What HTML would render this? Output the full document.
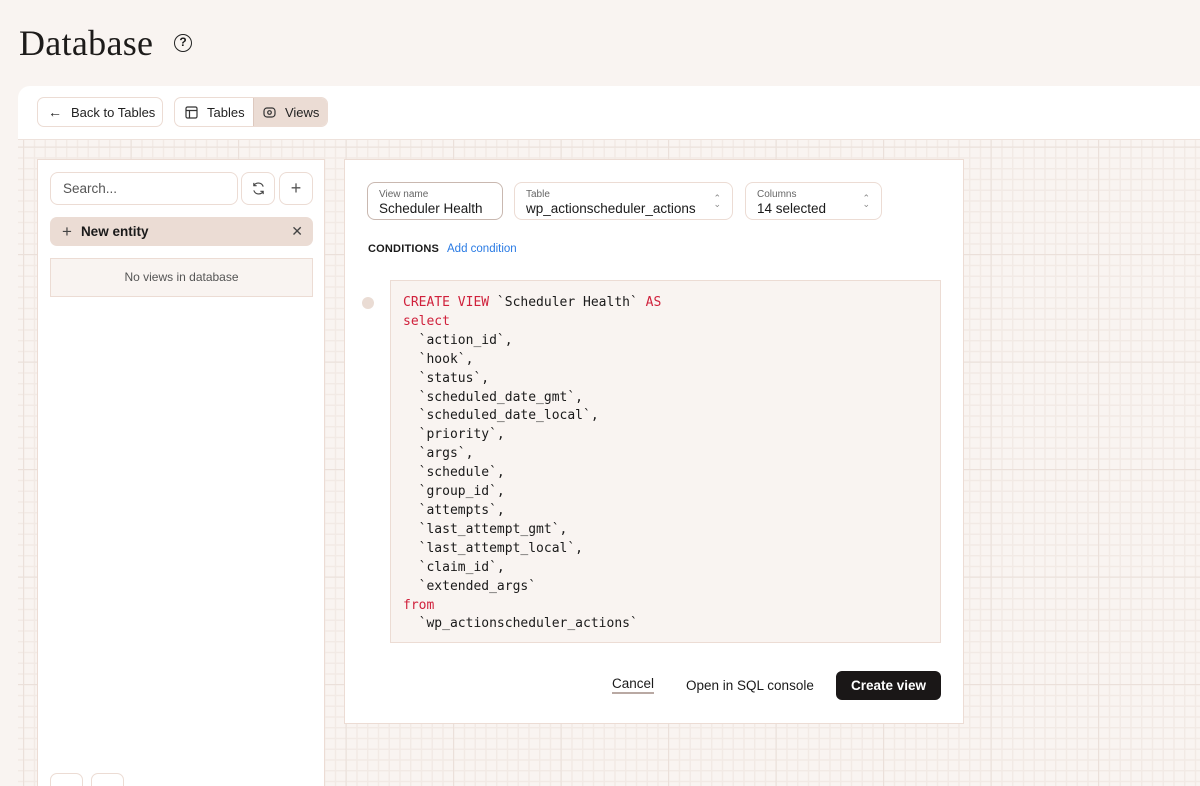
<!DOCTYPE html>
<html><head><meta charset="utf-8"><style>
*{box-sizing:border-box;margin:0;padding:0}
html,body{width:1200px;height:786px;overflow:hidden}
body{background:#f9f4f1;font-family:"Liberation Sans",sans-serif;color:#1a1a1a;position:relative}
h1{position:absolute;left:19px;top:22px;font-family:"Liberation Serif",serif;font-weight:400;font-size:36px;letter-spacing:0.3px;color:#1d1b1a}
.help{position:absolute;left:174px;top:34px;width:18px;height:18px;border:1.8px solid #222;border-radius:50%;font-size:12px;font-weight:bold;text-align:center;line-height:15px}
.top{position:absolute;left:18px;top:86px;width:1182px;height:53px;background:#fff;border-radius:12px 0 0 0}
.btn{position:absolute;height:30px;border:1px solid #ecdcd4;border-radius:7px;background:#fff;font-size:13px;display:flex;align-items:center;color:#222}
.grid{position:absolute;left:18px;top:139px;width:1182px;height:647px;background-color:#f9f4f1;
background-image:linear-gradient(#ebe0da 1px,transparent 1px),linear-gradient(90deg,#ebe0da 1px,transparent 1px),linear-gradient(#f2eae5 1.5px,transparent 1.5px),linear-gradient(90deg,#f2eae5 1.5px,transparent 1.5px);
background-size:107.5px 107.5px,107.5px 107.5px,10.75px 10.75px,10.75px 10.75px;background-position:5px 6.5px,5px 6.5px,5px 6.5px,5px 6.5px;border-top:1px solid #eee2dc}
.left{position:absolute;left:37px;top:159px;width:288px;height:627px;background:#fff;border:1px solid #ecdcd4;border-bottom:none;overflow:hidden}
.main{position:absolute;left:344px;top:159px;width:620px;height:565px;background:#fff;border:1px solid #ecdcd4}
.field{position:absolute;height:38px;border:1px solid #ecdcd4;border-radius:8px;background:#fff;padding:6px 11px}
.field small{display:block;font-size:10px;color:#666;line-height:11px}
.field span{display:block;font-size:13.5px;color:#1a1a1a;line-height:18px}
.chev{position:absolute;right:11px;top:12px;font-size:9px;color:#888;line-height:6px;text-align:center}
pre{position:absolute;left:390px;top:280px;width:551px;height:363px;background:#f9f4f1;border:1px solid #ecdcd4;font-family:"DejaVu Sans Mono","Liberation Mono",monospace;font-size:13px;line-height:18.9px;padding:13px 12px;color:#1a1a1a}
.k{color:#d0213c}
</style></head><body>
<h1>Database</h1><div class="help">?</div>
<div class="top"></div>
<div class="btn" style="left:37px;top:97px;width:126px;padding-left:10px"><span style="font-size:14px;margin-right:9px">←</span>Back to Tables</div>
<div class="btn" style="left:174px;top:97px;width:154px;overflow:hidden">
 <div style="display:flex;align-items:center;padding-left:10px;width:79px;height:100%"><svg width="13" height="13" viewBox="0 0 13 13" fill="none" stroke="#333" stroke-width="1.2"><rect x="1" y="1" width="11" height="11" rx="1.5"/><path d="M1 4.5h11M4.5 4.5v7.5"/></svg><span style="margin-left:9px">Tables</span></div>
 <div style="display:flex;align-items:center;padding-left:9px;width:75px;height:100%;background:#ebdcd4;border-left:1px solid #ddc9bf"><svg width="13" height="13" viewBox="0 0 13 13" fill="none" stroke="#333" stroke-width="1.2"><rect x="1" y="2" width="11" height="9" rx="3"/><circle cx="6.5" cy="6.5" r="1.8"/></svg><span style="margin-left:9px">Views</span></div>
</div>
<div class="grid"></div>
<div class="left">
 <div class="btn" style="left:12px;top:12px;width:188px;height:33px;padding-left:12px;font-size:13.5px;color:#555;border-radius:8px">Search...</div>
 <div class="btn" style="left:203px;top:12px;width:34px;height:33px;justify-content:center;border-radius:8px"><svg width="15" height="15" viewBox="0 0 16 16" fill="none" stroke="#444" stroke-width="1.2"><path d="M13 6a5.5 5.5 0 0 0-10-1M3 10a5.5 5.5 0 0 0 10 1"/><path d="M3 2v3h3M13 14v-3h-3"/></svg></div>
 <div class="btn" style="left:241px;top:12px;width:34px;height:33px;justify-content:center;border-radius:8px;font-size:18px;color:#555;font-weight:300">+</div>
 <div style="position:absolute;left:12px;top:57px;width:263px;height:29px;background:#ebdcd4;border-radius:7px;font-size:13.5px;font-weight:bold;display:flex;align-items:center;padding-left:12px"><span style="font-weight:300;font-size:17px;margin-right:9px;color:#444">+</span>New entity<span style="position:absolute;right:10px;font-weight:300;font-size:14px;color:#444">✕</span></div>
 <div style="position:absolute;left:12px;top:98px;width:263px;height:39px;background:#f9f4f1;border:1px solid #ecdcd4;font-size:12px;color:#555;text-align:center;line-height:37px">No views in database</div>
 <div class="btn" style="left:12px;top:613px;width:33px;height:30px"></div>
 <div class="btn" style="left:53px;top:613px;width:33px;height:30px"></div>
</div>
<div class="main"></div>
<div class="field" style="left:367px;top:182px;width:136px;border-color:#c9b8b0"><small>View name</small><span>Scheduler Health</span></div>
<div class="field" style="left:514px;top:182px;width:219px"><small>Table</small><span>wp_actionscheduler_actions</span><div class="chev">⌃<br>⌄</div></div>
<div class="field" style="left:745px;top:182px;width:137px"><small>Columns</small><span>14 selected</span><div class="chev">⌃<br>⌄</div></div>
<div style="position:absolute;left:368px;top:243px;font-size:11px;font-weight:bold;letter-spacing:0.2px">CONDITIONS</div>
<div style="position:absolute;left:447px;top:243px;font-size:11.5px;color:#2a7be4">Add condition</div>
<div style="position:absolute;left:362px;top:297px;width:12px;height:12px;border-radius:50%;background:#eadcd4"></div>
<pre><span class="k">CREATE VIEW</span> `Scheduler Health` <span class="k">AS</span>
<span class="k">select</span>
  `action_id`,
  `hook`,
  `status`,
  `scheduled_date_gmt`,
  `scheduled_date_local`,
  `priority`,
  `args`,
  `schedule`,
  `group_id`,
  `attempts`,
  `last_attempt_gmt`,
  `last_attempt_local`,
  `claim_id`,
  `extended_args`
<span class="k">from</span>
  `wp_actionscheduler_actions`</pre>
<div style="position:absolute;left:612px;top:676px;font-size:13.5px;border-bottom:2px solid #b9a9a3;padding-bottom:1px">Cancel</div>
<div style="position:absolute;left:686px;top:678px;font-size:13.5px">Open in SQL console</div>
<div style="position:absolute;left:836px;top:671px;width:105px;height:29px;background:#1a1717;border-radius:6px;color:#fff;font-size:13.5px;font-weight:bold;text-align:center;line-height:29px">Create view</div>
</body></html>
